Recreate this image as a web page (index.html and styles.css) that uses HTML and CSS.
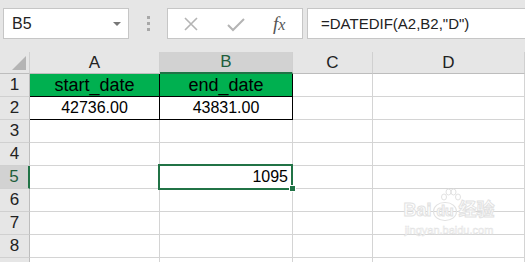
FILE: index.html
```html
<!DOCTYPE html>
<html lang="zh">
<head>
  <meta charset="UTF-8">
  <title>DATEDIF</title>
  <link rel="stylesheet" href="styles.css">
</head>
<body>

  <div class="toolbar">
    <div class="namebox">
      <span>B5</span>
      <span class="arrow"></span>
    </div>
    <div class="dots"><i></i><i></i><i></i></div>
    <div class="fnbox">
      <svg class="ico" width="16" height="14" viewBox="0 0 16 14">
        <path d="M2 1 L14 13 M14 1 L2 13" stroke="#b4b4b4" stroke-width="1.6" fill="none"/>
      </svg>
      <svg class="ico" width="18" height="14" viewBox="0 0 18 14">
        <path d="M1 7 L6 12 L17 1" stroke="#b4b4b4" stroke-width="2" fill="none"/>
      </svg>
      <span class="fx">f<sub>x</sub></span>
    </div>
    <div class="formula">=DATEDIF(A2,B2,"D")</div>
  </div>

  <div class="sheet">
    <div class="hd corner"><span class="tri"></span></div>
    <div class="hd col">A</div>
    <div class="hd col sel">B</div>
    <div class="hd col">C</div>
    <div class="hd col">D</div>

    <div class="hd row">1</div>
    <div class="c green boxed">start_date</div>
    <div class="c green boxed">end_date</div>
    <div class="c"></div>
    <div class="c"></div>

    <div class="hd row">2</div>
    <div class="c center boxed">42736.00</div>
    <div class="c center boxed">43831.00</div>
    <div class="c"></div>
    <div class="c"></div>

    <div class="hd row">3</div>
    <div class="c"></div><div class="c"></div><div class="c"></div><div class="c"></div>

    <div class="hd row">4</div>
    <div class="c"></div><div class="c"></div><div class="c"></div><div class="c"></div>

    <div class="hd row sel">5</div>
    <div class="c"></div>
    <div class="c num active">1095</div>
    <div class="c"></div>
    <div class="c"></div>

    <div class="hd row">6</div>
    <div class="c"></div><div class="c"></div><div class="c"></div><div class="c"></div>

    <div class="hd row">7</div>
    <div class="c"></div><div class="c"></div><div class="c"></div><div class="c"></div>

    <div class="hd row">8</div>
    <div class="c"></div><div class="c"></div><div class="c"></div><div class="c"></div>

    <!-- row 9 only peeks in at the bottom edge -->
    <div class="hd row"></div>
    <div class="c"></div><div class="c"></div><div class="c"></div><div class="c"></div>

    <div class="watermark">
      <svg class="paw" width="22" height="16" viewBox="0 0 22 16">
        <g fill="none" stroke="#e2e2e2" stroke-width="1">
          <ellipse cx="4" cy="9" rx="2.5" ry="3"/>
          <ellipse cx="8.5" cy="4" rx="2.5" ry="3"/>
          <ellipse cx="13.5" cy="4" rx="2.5" ry="3"/>
          <ellipse cx="18" cy="9" rx="2.5" ry="3"/>
        </g>
      </svg>
      <div class="wm-logo">Bai<span class="du">du</span>经验</div>
      <div class="wm-url">jingyan.baidu.com</div>
    </div>
  </div>

</body>
</html>
```

FILE: styles.css
```css
body {
  margin: 0;
  font-family: "Liberation Sans", Arial, "Noto Sans CJK SC", sans-serif;
  background: #fff;
  overflow: hidden;
}
.toolbar {
  height: 52px;
  box-sizing: border-box;
  padding-top: 8px;
  background: #e6e6e6;
  display: flex;
  align-items: flex-start;
}
.namebox {
  margin-left: 3px;
  width: 126px;
  height: 31px;
  box-sizing: border-box;
  background: #fff;
  border: 1px solid #c6c6c6;
  display: flex;
  align-items: center;
  justify-content: space-between;
  padding: 0 7px 0 8px;
  font-size: 16px;
  color: #222;
}
.arrow {
  width: 0;
  height: 0;
  border-left: 4px solid transparent;
  border-right: 4px solid transparent;
  border-top: 4px solid #777;
}
.dots {
  width: 38px;
  height: 31px;
  display: flex;
  flex-direction: column;
  align-items: center;
  justify-content: center;
  gap: 3px;
}
.dots i {
  width: 3px;
  height: 3px;
  background: #a8a8a8;
}
.fnbox {
  width: 136px;
  height: 31px;
  box-sizing: border-box;
  background: #fff;
  border: 1px solid #c6c6c6;
  display: flex;
  align-items: center;
  padding-left: 15px;
}
.ico:nth-child(2) {
  margin-left: 28px;
  margin-top: 3px;
}
.fx {
  margin-left: 28px;
  font-family: "Liberation Serif", serif;
  font-style: italic;
  font-size: 19px;
  color: #555;
}
.fx sub {
  font-size: 16px;
  vertical-align: 0;
}
.formula {
  flex: 1;
  margin-left: 4px;
  margin-right: -6px;
  height: 31px;
  box-sizing: border-box;
  background: #fff;
  border: 1px solid #c6c6c6;
  padding-left: 13px;
  line-height: 29px;
  font-size: 15px;
  color: #222;
}
.sheet {
  position: relative;
  display: grid;
  grid-template-columns: 30px 130px 133px 80px 152px;
  grid-template-rows: 22px repeat(9, 23px);
  font-size: 16px;
}
.hd {
  background: #e6e6e6;
  color: #222;
  box-sizing: border-box;
  display: flex;
  align-items: center;
  justify-content: center;
}
.col {
  border-right: 1px solid #d0d0d0;
  border-bottom: 1px solid #bdbdbd;
  font-size: 17px;
}
.row {
  border-right: 1px solid #bdbdbd;
  border-bottom: 1px solid #d0d0d0;
  font-size: 17px;
}
.corner {
  position: relative;
  border-right: 1px solid #d0d0d0;
  border-bottom: 1px solid #bdbdbd;
}
.tri {
  position: absolute;
  right: 3px;
  bottom: 3px;
  width: 0;
  height: 0;
  border-left: 14px solid transparent;
  border-bottom: 14px solid #b4b4b4;
}
.hd.sel {
  background: #d2d2d2;
  color: #1e5e3c;
}
.col.sel {
  border-bottom: 2px solid #217346;
}
.row.sel {
  border-right: 2px solid #217346;
}
.c {
  box-sizing: border-box;
  border-right: 1px solid #d4d4d4;
  border-bottom: 1px solid #d4d4d4;
  display: flex;
  align-items: center;
  color: #000;
  white-space: nowrap;
}
.green {
  background: #00b050;
  justify-content: center;
  font-size: 18px;
}
.center {
  justify-content: center;
}
.boxed {
  border-right-color: #000;
  border-bottom-color: #000;
}
.num {
  justify-content: flex-end;
  padding-right: 4px;
}
.active {
  position: relative;
}
.active::after {
  content: "";
  position: absolute;
  left: -2px;
  top: -2px;
  right: -1px;
  bottom: -2px;
  border: 2px solid #217346;
}
.active::before {
  content: "";
  position: absolute;
  right: -4px;
  bottom: -4px;
  width: 5px;
  height: 5px;
  background: #217346;
  border: 1px solid #fff;
  z-index: 1;
}
.watermark {
  position: absolute;
  left: 400px;
  top: 136px;
  width: 98px;
  color: #fff;
  -webkit-text-stroke: 1px #e2e2e2;
  text-align: center;
  white-space: nowrap;
  pointer-events: none;
}
.paw {
  display: block;
  margin: 0 0 -5px 40px;
}
.wm-logo {
  font-size: 18px;
  font-weight: bold;
  line-height: 22px;
}
.du {
  display: inline-block;
  margin: 0 2px;
  padding: 0 2px;
  border: 1px solid #e2e2e2;
  border-radius: 50%;
  font-size: 14px;
  line-height: 17px;
}
.wm-url {
  margin-top: 3px;
  font-size: 11px;
  -webkit-text-stroke: 0.5px #e2e2e2;
}
```
